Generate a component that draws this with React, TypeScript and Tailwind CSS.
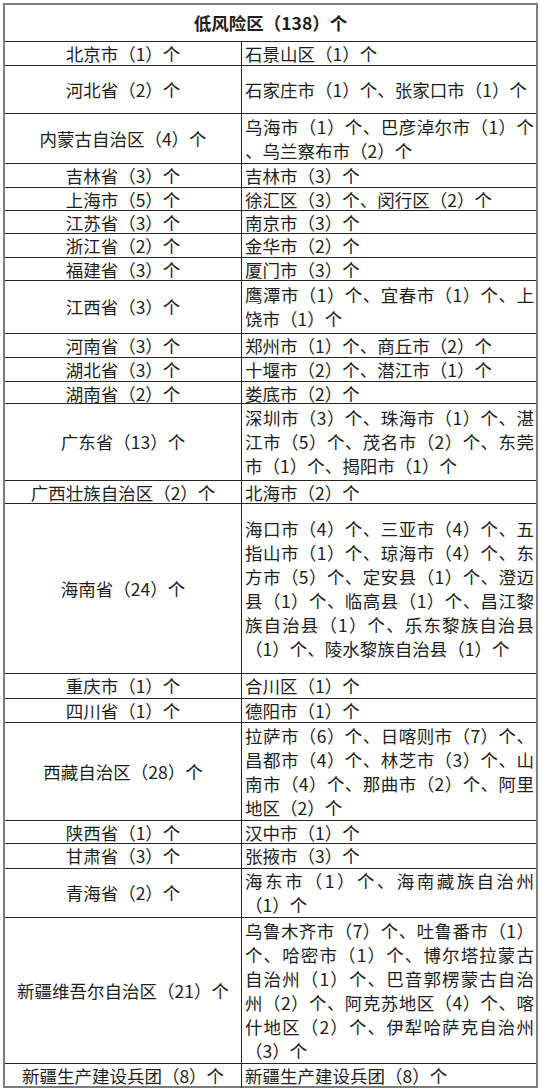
import React from "react";

type Row = { left: string; right: string[]; h: number };

const rows: Row[] = [
  { left: "北京市（1）个", right: ["石景山区（1）个"], h: 24 },
  { left: "河北省（2）个", right: ["石家庄市（1）个、张家口市（1）个"], h: 48 },
  { left: "内蒙古自治区（4）个", right: ["乌海市（1）个、巴彦淖尔市（1）个", "、乌兰察布市（2）个"], h: 50 },
  { left: "吉林省（3）个", right: ["吉林市（3）个"], h: 24 },
  { left: "上海市（5）个", right: ["徐汇区（3）个、闵行区（2）个"], h: 23 },
  { left: "江苏省（3）个", right: ["南京市（3）个"], h: 23 },
  { left: "浙江省（2）个", right: ["金华市（2）个"], h: 24 },
  { left: "福建省（3）个", right: ["厦门市（3）个"], h: 23 },
  { left: "江西省（3）个", right: ["鹰潭市（1）个、宜春市（1）个、上", "饶市（1）个"], h: 53 },
  { left: "河南省（3）个", right: ["郑州市（1）个、商丘市（2）个"], h: 24 },
  { left: "湖北省（3）个", right: ["十堰市（2）个、潜江市（1）个"], h: 24 },
  { left: "湖南省（2）个", right: ["娄底市（2）个"], h: 22 },
  {
    left: "广东省（13）个",
    right: ["深圳市（3）个、珠海市（1）个、湛", "江市（5）个、茂名市（2）个、东莞", "市（1）个、揭阳市（1）个"],
    h: 77,
  },
  { left: "广西壮族自治区（2）个", right: ["北海市（2）个"], h: 23 },
  {
    left: "海南省（24）个",
    right: [
      "海口市（4）个、三亚市（4）个、五",
      "指山市（1）个、琼海市（4）个、东",
      "方市（5）个、定安县（1）个、澄迈",
      "县（1）个、临高县（1）个、昌江黎",
      "族自治县（1）个、乐东黎族自治县",
      "（1）个、陵水黎族自治县（1）个",
    ],
    h: 170,
  },
  { left: "重庆市（1）个", right: ["合川区（1）个"], h: 25 },
  { left: "四川省（1）个", right: ["德阳市（1）个"], h: 24 },
  {
    left: "西藏自治区（28）个",
    right: [
      "拉萨市（6）个、日喀则市（7）个、",
      "昌都市（4）个、林芝市（3）个、山",
      "南市（4）个、那曲市（2）个、阿里",
      "地区（2）个",
    ],
    h: 98,
  },
  { left: "陕西省（1）个", right: ["汉中市（1）个"], h: 23 },
  { left: "甘肃省（3）个", right: ["张掖市（3）个"], h: 25 },
  { left: "青海省（2）个", right: ["海东市（1）个、海南藏族自治州", "（1）个"], h: 49 },
  {
    left: "新疆维吾尔自治区（21）个",
    right: [
      "乌鲁木齐市（7）个、吐鲁番市（1）",
      "个、哈密市（1）个、博尔塔拉蒙古",
      "自治州（1）个、巴音郭楞蒙古自治",
      "州（2）个、阿克苏地区（4）个、喀",
      "什地区（2）个、伊犁哈萨克自治州",
      "（3）个",
    ],
    h: 146,
  },
  { left: "新疆生产建设兵团（8）个", right: ["新疆生产建设兵团（8）个"], h: 23 },
];

export default function App() {
  return (
    <div
      className="w-[542px] h-[1091px] bg-white pt-[3px] pl-[3px] text-[#1e1e1e]"
      style={{ fontFamily: '"Noto Sans CJK SC", "Noto Sans", sans-serif' }}
    >
      <div className="w-[535px] border-2 border-[#7c7c7c] bg-white">
        <div className="h-[36px] flex items-center justify-center text-[17.5px] font-bold leading-none">
          低风险区（138）个
        </div>
        {rows.map((r, i) => (
          <div
            key={i}
            className="grid grid-cols-[237px_1fr] border-t border-[#262626]"
            style={{ height: r.h }}
          >
            <div className="border-r border-[#262626] flex items-center justify-center text-[17.5px] leading-[24px] whitespace-nowrap">
              {r.left}
            </div>
            <div className="flex flex-col justify-center pl-[3px] pr-[2px] text-[17.5px] leading-[24px]">
              {r.right.map((line, j) => (
                <div
                  key={j}
                  className={
                    j < r.right.length - 1
                      ? "whitespace-nowrap text-justify [text-align-last:justify]"
                      : "whitespace-nowrap"
                  }
                >
                  {line}
                </div>
              ))}
            </div>
          </div>
        ))}
      </div>
    </div>
  );
}
